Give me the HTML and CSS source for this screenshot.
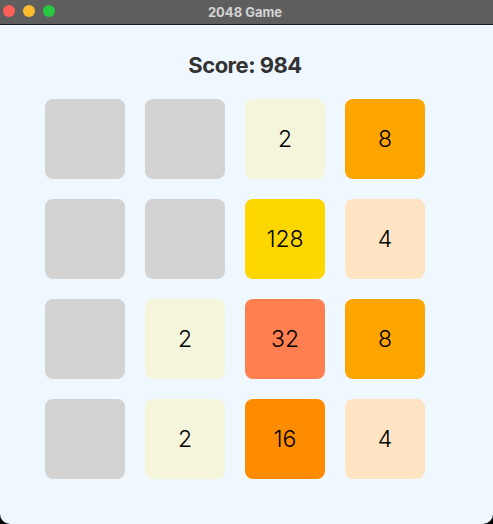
FILE: index.html
```html
<!DOCTYPE html>
<html>
<head>
<meta charset="utf-8">
<link rel="stylesheet" href="styles.css">
</head>
<body>
<div class="window">
  <div class="titlebar">
    <div class="lights">
      <span class="light red"></span>
      <span class="light yellow"></span>
      <span class="light green"></span>
    </div>
    <div class="title">2048 Game</div>
  </div>
  <div class="content">
    <div class="score">Score: 984</div>
    <div class="grid">
      <div class="tile t0"></div>
      <div class="tile t0"></div>
      <div class="tile t2">2</div>
      <div class="tile t8">8</div>
      <div class="tile t0"></div>
      <div class="tile t0"></div>
      <div class="tile t128">128</div>
      <div class="tile t4">4</div>
      <div class="tile t0"></div>
      <div class="tile t2">2</div>
      <div class="tile t32">32</div>
      <div class="tile t8">8</div>
      <div class="tile t0"></div>
      <div class="tile t2">2</div>
      <div class="tile t16">16</div>
      <div class="tile t4">4</div>
    </div>
  </div>
</div>
</body>
</html>
```
FILE: styles.css
```css
html, body {
  margin: 0;
  padding: 0;
  background: #000;
  width: 493px;
  height: 524px;
  overflow: hidden;
}
.window {
  width: 493px;
  height: 524px;
  display: flex;
  flex-direction: column;
  border-radius: 0 0 10px 10px;
  overflow: hidden;
  background: #f0f8ff;
  font-family: Inter, "Liberation Sans", sans-serif;
}
.titlebar {
  position: relative;
  height: 24px;
  background: #5e5e5e;
  border-bottom: 1px solid #1a1a1a;
  display: flex;
  align-items: center;
  justify-content: center;
  flex-shrink: 0;
}
.lights {
  position: absolute;
  left: 3px;
  top: 5px;
  display: flex;
  gap: 8px;
}
.light {
  width: 12px;
  height: 12px;
  border-radius: 50%;
  display: block;
}
.red { background: #ff5f57; }
.yellow { background: #febc2e; }
.green { background: #28c840; }
.title {
  color: #d4d4d4;
  font-weight: 700;
  font-size: 13px;
  margin-left: -3px;
}
.content {
  flex: 1;
  display: flex;
  flex-direction: column;
  align-items: center;
}
.score {
  margin-top: 27px;
  margin-left: -3px;
  font-size: 22px;
  font-weight: 700;
  color: #333;
  height: 26px;
  line-height: 26px;
  letter-spacing: -0.5px;
}
.grid {
  align-self: flex-start;
  margin-top: 21px;
  margin-left: 45px;
  display: grid;
  grid-template-columns: repeat(4, 80px);
  grid-auto-rows: 80px;
  gap: 20px;
}
.tile {
  border-radius: 8px;
  display: flex;
  align-items: center;
  justify-content: center;
  font-size: 23px;
  font-weight: 350;
  color: #000;
}
.t0 { background: #d3d3d3; }
.t2 { background: #f5f5dc; }
.t4 { background: #ffe4c4; }
.t8 { background: #ffa500; }
.t16 { background: #ff8c00; }
.t32 { background: #ff7f50; }
.t128 { background: #ffd700; }
```
